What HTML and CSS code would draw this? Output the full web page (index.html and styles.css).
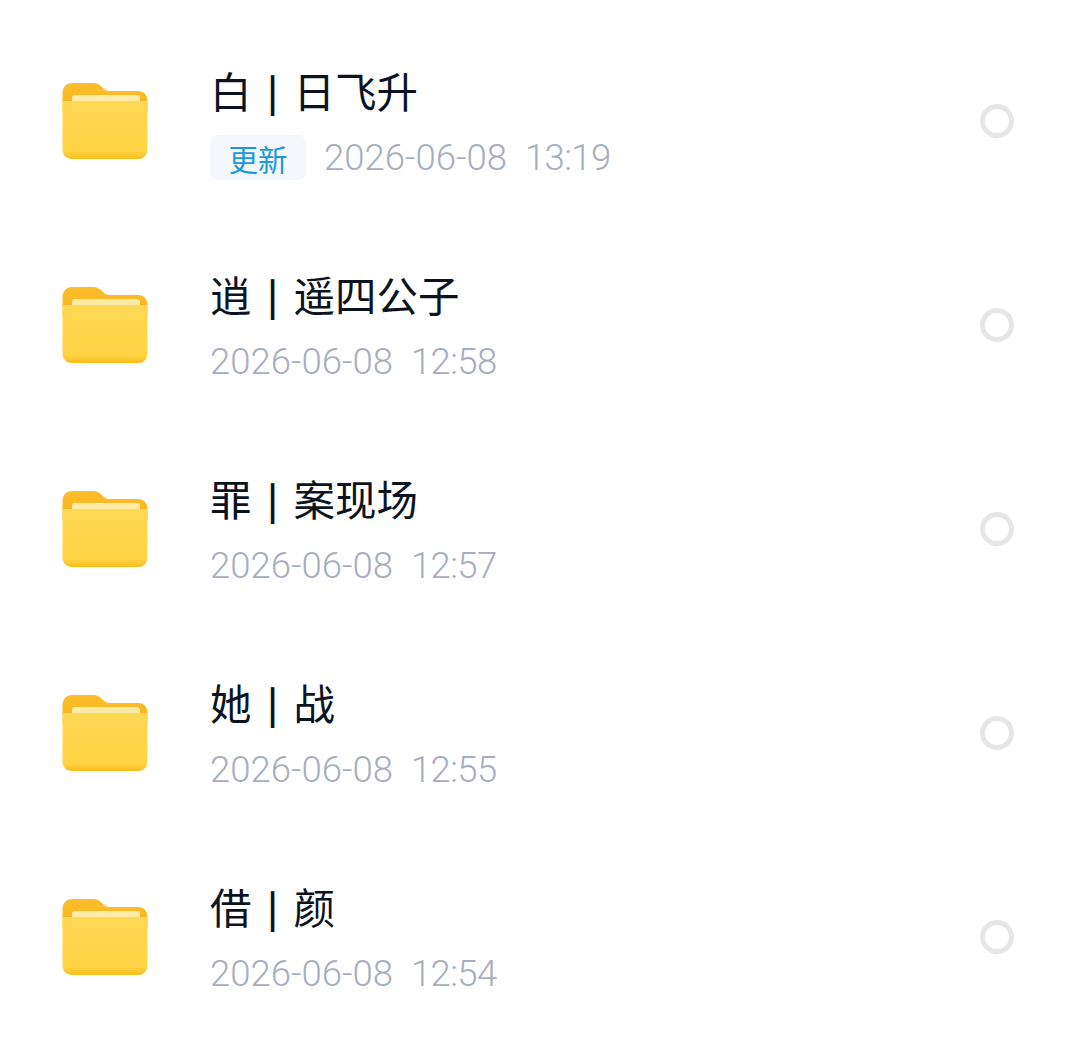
FILE: index.html
```html
<!DOCTYPE html>
<html lang="zh">
<head>
<meta charset="utf-8">
<title>文件列表</title>
<link rel="stylesheet" href="styles.css">
</head>
<body>
<svg class="defs" width="0" height="0" aria-hidden="true">
  <defs>
    <linearGradient id="front" x1="0" y1="0" x2="0" y2="1">
      <stop offset="0" stop-color="#fed955"/>
      <stop offset="0.87" stop-color="#ffd343"/>
      <stop offset="1" stop-color="#fbbc1a"/>
    </linearGradient>
    <linearGradient id="back" x1="0" y1="0" x2="0" y2="1">
      <stop offset="0" stop-color="#fcbe2c"/>
      <stop offset="1" stop-color="#f9b21c"/>
    </linearGradient>
    <symbol id="folder" viewBox="0 0 86 78">
      <path fill="url(#back)" d="M0.500 12C0.500 5 4 1 10 1H30C36 1 38 3 41 6C44 9 46 9 50 9H76C82 9 85.500 13 85.500 19V30H0.500Z"/>
      <rect x="10" y="13" width="68" height="12" rx="3" fill="#fdeaa4"/>
      <path fill="url(#front)" d="M0.500 19H85.500V67C85.500 73 82 77 76 77H10C4 77 0.500 73 0.500 67Z"/>
    </symbol>
  </defs>
</svg>
<ul class="list">
  <li class="row">
    <svg class="folder"><use href="#folder"/></svg>
    <div class="info">
      <div class="title">白<span class="sep">|</span>日飞升</div>
      <div class="meta"><span class="tag">更新</span><span class="date">2026-06-08<span class="time">13:19</span></span></div>
    </div>
    <span class="radio"></span>
  </li>
  <li class="row">
    <svg class="folder"><use href="#folder"/></svg>
    <div class="info">
      <div class="title">逍<span class="sep">|</span>遥四公子</div>
      <div class="meta"><span class="date">2026-06-08<span class="time">12:58</span></span></div>
    </div>
    <span class="radio"></span>
  </li>
  <li class="row">
    <svg class="folder"><use href="#folder"/></svg>
    <div class="info">
      <div class="title">罪<span class="sep">|</span>案现场</div>
      <div class="meta"><span class="date">2026-06-08<span class="time">12:57</span></span></div>
    </div>
    <span class="radio"></span>
  </li>
  <li class="row">
    <svg class="folder"><use href="#folder"/></svg>
    <div class="info">
      <div class="title">她<span class="sep">|</span>战</div>
      <div class="meta"><span class="date">2026-06-08<span class="time">12:55</span></span></div>
    </div>
    <span class="radio"></span>
  </li>
  <li class="row">
    <svg class="folder"><use href="#folder"/></svg>
    <div class="info">
      <div class="title">借<span class="sep">|</span>颜</div>
      <div class="meta"><span class="date">2026-06-08<span class="time">12:54</span></span></div>
    </div>
    <span class="radio"></span>
  </li>
</ul>
</body>
</html>
```
FILE: styles.css
```css
* { box-sizing: border-box; }
html, body { margin: 0; padding: 0; background: #fff; }
body {
  width: 1080px;
  height: 1043px;
  overflow: hidden;
  font-family: "Noto Sans CJK SC", "Noto Sans", sans-serif;
}
.defs { display: block; height: 0; }
.list { list-style: none; margin: 0; padding: 19px 0 0; }
.row {
  height: 204px;
  display: flex;
  align-items: center;
  padding: 0 66px 0 62px;
}
.folder { width: 86px; height: 78px; flex: none; margin-right: 62px; }
.info {
  flex: 1;
  align-self: flex-start;
  padding-top: 46px;
  display: flex;
  flex-direction: column;
  gap: 20px;
}
.title {
  height: 50px;
  font-size: 41.500px;
  line-height: 50px;
  color: #0b1320;
  white-space: nowrap;
}
.sep {
  display: inline-block;
  width: 42px;
  text-align: center;
  font-size: 36px;
  font-weight: 700;
  line-height: 50px;
  vertical-align: top;
}
.meta { display: flex; align-items: center; height: 45px; }
.tag {
  width: 96px;
  height: 45px;
  margin-right: 18px;
  background: #f4f8fc;
  border-radius: 8px;
  color: #1b98de;
  font-size: 29.500px;
  line-height: 47px;
  text-align: center;
}
.date {
  font-family: Roboto, "Noto Sans", sans-serif;
  font-size: 36.500px;
  font-weight: 300;
  line-height: 45px;
  color: #a6aebd;
  white-space: nowrap;
}
.time { margin-left: 18px; letter-spacing: -0.600px; }
.radio {
  width: 34px;
  height: 34px;
  flex: none;
  border: 5px solid #e6e6e6;
  border-radius: 50%;
}
```
